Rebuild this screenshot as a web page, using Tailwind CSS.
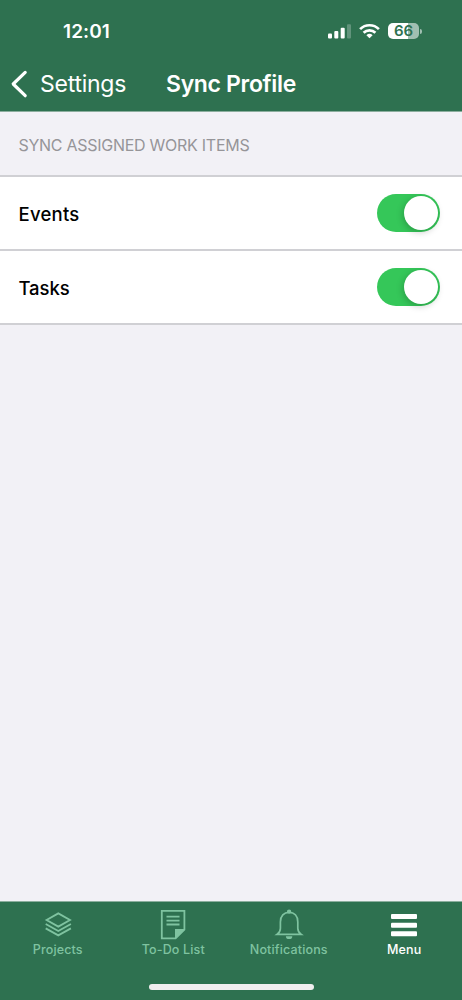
<!DOCTYPE html>
<html lang="en">
<head>
<meta charset="utf-8">
<meta name="viewport" content="width=device-width, initial-scale=1">
<title>Sync Profile</title>
<script src="https://cdn.jsdelivr.net/npm/@tailwindcss/browser@4"></script>
</head>
<body class="flex h-[1000px] w-[462px] flex-col overflow-hidden bg-[#f2f1f6] font-['Inter','Liberation_Sans',sans-serif] whitespace-nowrap">
  <header class="h-28 shrink-0 border-b border-[#8cae9e] bg-[#2e7150] text-white">
    <div class="flex h-[62px] items-center justify-between pr-[40px] pl-[63px]">
      <span class="pt-[2px] text-[19px] leading-6 font-semibold tracking-[0.1px]">12:01</span>
      <div class="flex items-center">
        <svg class="h-4 w-[24px]" viewBox="0 0 24 16" fill="#fff"><rect x="0" y="10.5" width="4" height="5" rx="1"/><rect x="6.3" y="8" width="4" height="7.5" rx="1"/><rect x="12.7" y="4.7" width="4" height="10.8" rx="1"/><rect x="19" y="1.2" width="4" height="14.3" rx="1" opacity=".25"/></svg>
        <svg class="ml-[7px] h-4 w-[21px]" viewBox="0 0 21 16" fill="none" stroke="#fff" stroke-width="2.7"><path d="M1.1 6.1a13.4 13.4 0 0 1 18.8 0"/><path d="M4.6 9.7a8.5 8.5 0 0 1 11.8 0"/><path d="M10.5 15.3 7.4 12.2a4.6 4.6 0 0 1 6.2 0z" fill="#fff" stroke="none"/></svg>
        <div class="ml-[8px] flex h-4 w-[31px] items-center justify-center rounded-[5px] bg-linear-to-r from-white from-66% to-[#a0bfb1] to-66% text-[15px] leading-4 font-semibold tracking-[-0.2px] text-[#2e7150]">66</div>
        <div class="ml-px h-[5px] w-[2px] rounded-r-full bg-[#a0bfb1]"></div>
      </div>
    </div>
    <div class="flex h-[44px] items-center">
      <svg class="ml-[10px] h-7 w-[18px]" viewBox="0 0 18 28" fill="none" stroke="#fff" stroke-width="3.2" stroke-linecap="round" stroke-linejoin="round"><path d="M15.2 2.4 3.2 14l12 11.7"/></svg>
      <span class="ml-[12px] w-[126px] text-[23px] leading-7 tracking-[-0.25px]">Settings</span>
      <h1 class="text-[23px] leading-7 font-semibold tracking-[-0.33px]">Sync Profile</h1>
    </div>
  </header>
  <main class="flex-1">
    <h2 class="flex h-[64px] items-center pt-px pl-[18.5px] text-[16px] tracking-[-0.27px] text-[#969599]">SYNC ASSIGNED WORK ITEMS</h2>
    <div class="border-y-2 -mt-px border-[#d0d0d4] bg-white text-[18.5px] font-medium text-black">
      <div class="flex h-[72px] items-center justify-between pr-[22px] pl-[18.5px]">
        <span class="pt-[3px] tracking-[0.25px]">Events</span>
        <div class="flex h-[38px] w-[63px] items-center justify-end rounded-full bg-[#35c759] pr-[2px]"><div class="size-[34px] rounded-full bg-white shadow-[-1px_2px_7px_rgba(0,0,0,0.22)]"></div></div>
      </div>
      <div class="flex h-[74px] items-center justify-between border-t-2 border-[#d0d0d4] pr-[22px] pl-[18.5px]">
        <span class="pt-[3px] tracking-[-0.1px]">Tasks</span>
        <div class="flex h-[38px] w-[63px] items-center justify-end rounded-full bg-[#35c759] pr-[2px]"><div class="size-[34px] rounded-full bg-white shadow-[-1px_2px_7px_rgba(0,0,0,0.22)]"></div></div>
      </div>
    </div>
  </main>
  <footer class="flex h-[99px] shrink-0 flex-col items-center border-t border-[#8cae9e] bg-[#2e7150]">
    <nav class="grid h-[82px] w-full grid-cols-4 text-[12.5px] leading-4 font-medium tracking-[0.15px] text-[#7fc3a0]">
      <div class="flex flex-col items-center pt-[6px]">
        <svg class="h-8 w-8" viewBox="0 0 32 32" fill="none" stroke="currentColor" stroke-width="1.8"><path d="M16.3 5.4 28 12 16.3 18.600 4.600 12z"/><path d="m3.700 16 12.600 7 12.600-7M3.700 20.400l12.600 7 12.600-7"/></svg>
        <span class="pt-[2px]">Projects</span>
      </div>
      <div class="flex flex-col items-center pt-[6px]">
        <svg class="h-8 w-8" viewBox="0 0 32 32" fill="none" stroke="currentColor" stroke-width="1.8"><path d="M4.800 2.800h22.600v18.800l-8.800 8.800H4.800z"/><path d="M18 31V21.100h10z" fill="currentColor" stroke="none"/><path d="M9.500 8.600h13M9.500 12.600h13M9.500 16.500h13"/></svg>
        <span class="pt-[2px]">To-Do List</span>
      </div>
      <div class="flex flex-col items-center pt-[6px]">
        <svg class="h-8 w-8" viewBox="0 0 32 32" fill="none" stroke="currentColor" stroke-width="1.700"><path d="M4.200 26.300c2.300-1.500 3.200-3 3.200-6V14c0-6.200 3.500-9.600 8.700-9.600s8.700 3.400 8.700 9.600v6.300c0 3 .9 4.500 3.200 6z"/><circle cx="16.100" cy="3.600" r="1.300" fill="currentColor"/><path d="M12.900 28.200h6.400a3.200 2.900 0 0 1-6.400 0z" fill="currentColor" stroke="none"/></svg>
        <span class="pt-[2px]">Notifications</span>
      </div>
      <div class="flex flex-col items-center pt-[6px] text-white">
        <svg class="h-8 w-8" viewBox="0 0 32 32" fill="currentColor"><rect x="3" y="6" width="26" height="5" rx="1"/><rect x="3" y="14.700" width="26" height="5" rx="1"/><rect x="3" y="23.200" width="26" height="5" rx="1"/></svg>
        <span class="pt-[2px]">Menu</span>
      </div>
    </nav>
    <div class="h-[6px] w-[165px] rounded-full bg-[#f0eeef]"></div>
  </footer>
</body>
</html>
